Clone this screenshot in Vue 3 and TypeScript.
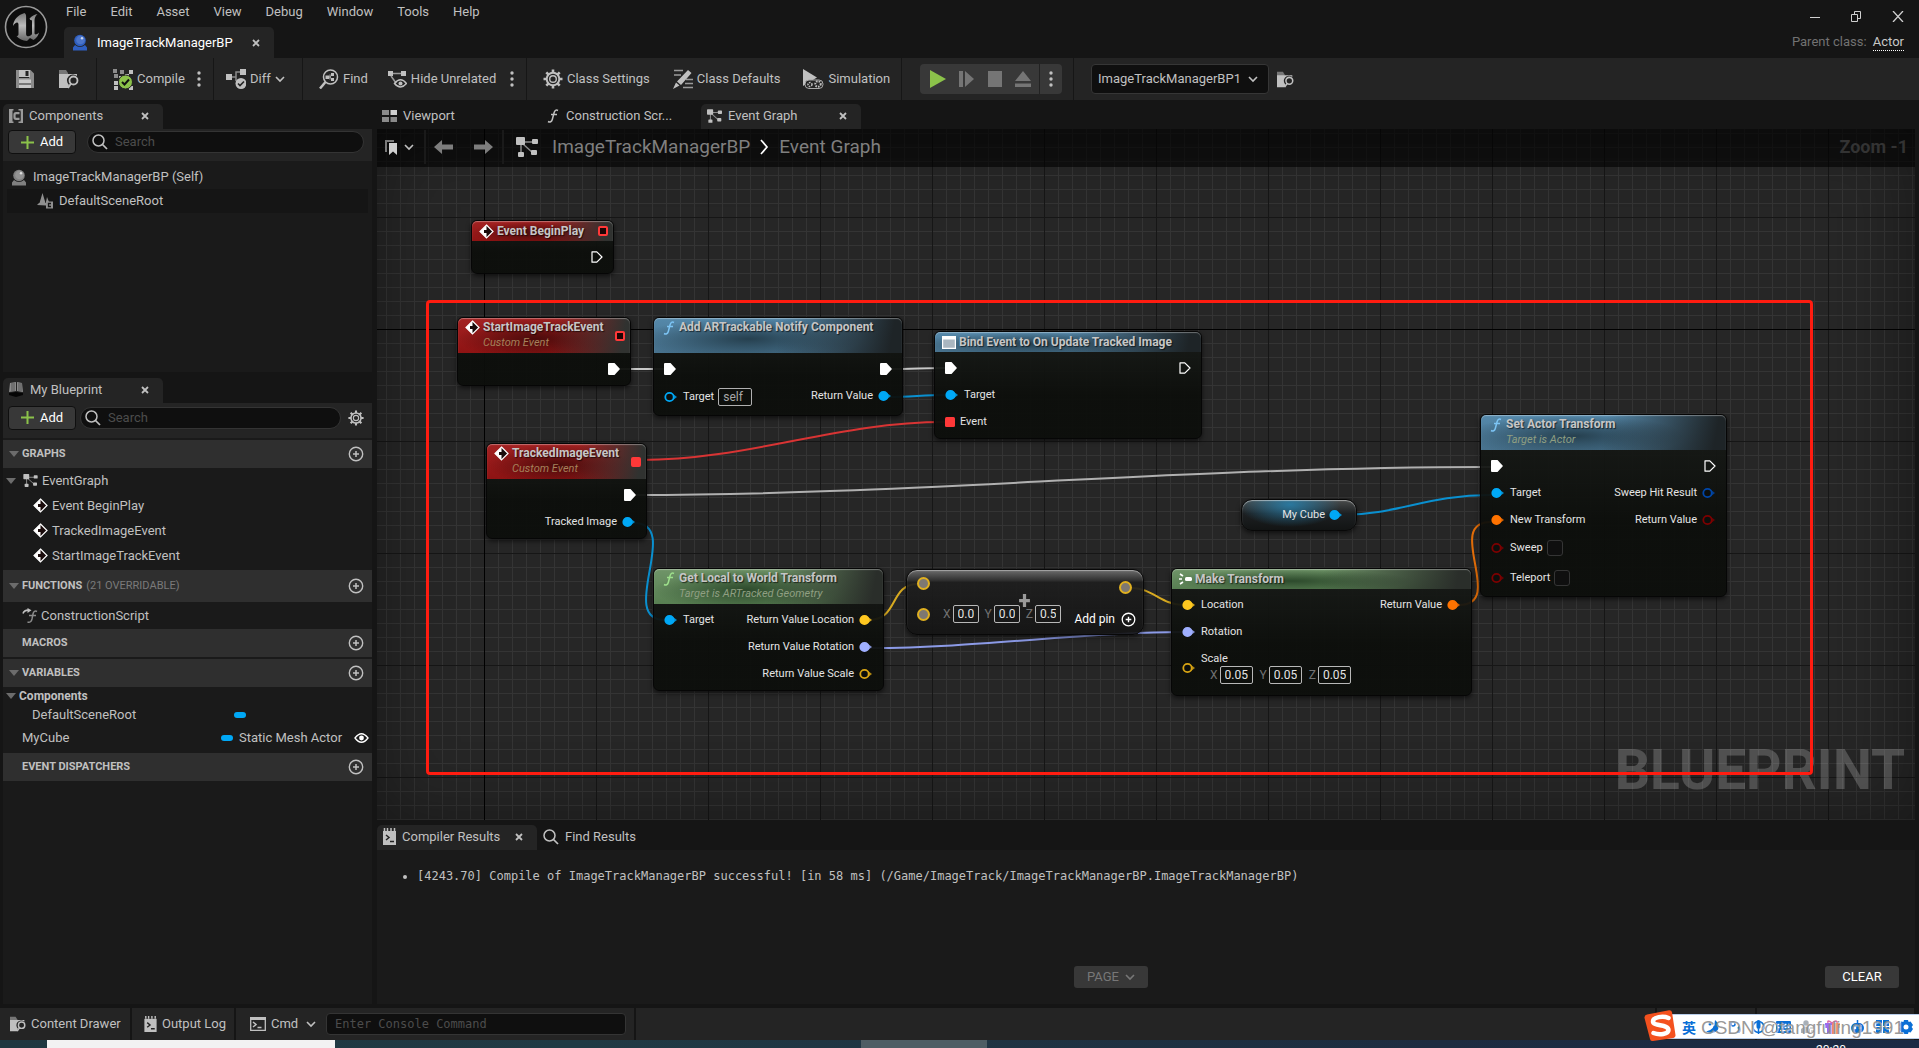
<script setup lang="ts">
import { h } from 'vue'

type Side = { kind: string; label?: string; color?: string; field?: string; check?: boolean; filled?: boolean; axes?: string[] }
interface GraphNode {
  id: string
  x: number
  y: number
  w: number
  tone: string
  icon: string
  title: string
  sub?: string
  tall?: boolean
  delegate?: 'open' | 'filled'
  left: Side[]
  right: Side[]
}

const blue = '#00a8f6'
const orange = '#ff7300'
const yellow = '#ffc820'
const lilac = '#9fafff'
const maroon = '#7d0000'

const icons: Record<string, [number, number, string]> = {
  unreal: [44, 44, '<defs><linearGradient id="ug" x1="0" y1="0" x2="0" y2="1"><stop offset="0" stop-color="#777"/><stop offset=".45" stop-color="#bbb"/><stop offset="1" stop-color="#666"/></linearGradient></defs><circle cx="22" cy="22" r="20.5" fill="#0d0d0d" stroke="#9a9a9a" stroke-width="1.6"/><path fill="url(#ug)" d="M20.500 8C13.500 10 9.500 15 9 21c1.500-2.500 3.500-4 4.700-3.300.8.500.8 1.400.8 2.300v9c0 1.500-.7 2-2 2 2.500 3 6 4.800 10.500 5l3-3 3.500 2c3-2 4.800-4.500 5.500-7.500-1.200 1.300-2.300 2-3.300 2-.9 0-1.200-.5-1.200-1.700V15.500c0-2.500 1-4.500 3-6.500-3 .5-5.500 1.800-8 4.500l.8 1.500c1.300-.2 1.700.3 1.700 1.500v12.500c-.8 1.300-2 2.200-3.500 2.200-1.600 0-2.400-.8-2.400-2.300V13c0-2 .3-3.800-1.600-5Z"/>'],
  orb: [16, 17, '<circle cx="8" cy="6.500" r="5.800" fill="currentColor"/><circle cx="8.500" cy="6" r="4.300" fill="#fff" opacity=".14"/><circle cx="10" cy="4.300" r="1.200" fill="#fff" opacity=".7"/><path fill="currentColor" d="M1 13.500l2-2.500c3 2.500 7 2.500 10 0l2 2.500V16.500H1Z"/>'],
  save: [18, 18, '<path fill="#8b8b8b" d="M0 0h3v8h10V0h1.500L18 3.500V18H0Z"/><path fill="#c0c0c0" d="M3 0h11v7H3Z"/><path fill="#242424" d="M9.500 1h3v5h-3Z"/><path fill="#c8c8c8" d="M3 9.500h12V18H3Z"/><path fill="#777" d="M3 13h12v2H3Z"/>'],
  browse: [20, 20, '<path fill="#767676" d="M0 1h7l2 3v2H0Z"/><path fill="#c0c0c0" d="M0 5h18v2a6 6 0 0 0-8 9l-1 3H0Z"/><circle cx="14.500" cy="11.500" r="4" fill="none" stroke="#c0c0c0" stroke-width="1.800"/><path stroke="#c0c0c0" stroke-width="1.800" d="M12 14.500L9 19"/>'],
  compile: [20, 21, '<path fill="#8c8c8c" d="M0 0h4v4H0ZM7 1h4v4H7ZM1 5h4v4H1Z"/><path fill="#c0c0c0" d="M16 1h4v4h-4ZM12 5h4v4h-4ZM6 7h4v4H6ZM1 12h4v4H1ZM1 17h4v4H1ZM16 17h4v4h-4Z"/><circle cx="12.500" cy="13" r="7" fill="#8bc24a" stroke="#242424"/><path fill="none" stroke="#111" stroke-width="2" d="M9 13l2.500 2.500L16 10.500"/>'],
  diff: [20, 20, '<path fill="#c0c0c0" d="M0 5h6v6H0ZM14 0h6v6h-6Z"/><path fill="none" stroke="#8a8a8a" stroke-width="1.500" d="M6 8h4M14 3h-4v9"/><circle cx="15" cy="14.500" r="5.500" fill="#c0c0c0"/><path fill="none" stroke="#242424" stroke-width="1.600" d="M12 14.500l2 2 4-4"/>'],
  find: [20, 20, '<circle cx="11.500" cy="8" r="7" fill="none" stroke="#c0c0c0" stroke-width="1.500"/><path stroke="#c0c0c0" stroke-width="2.500" d="M6.500 13L1 19.500"/><path fill="#c0c0c0" d="M6.500 6.500h3.500v3.500H6.500ZM12 4h3v3h-3ZM12 9h3v3h-3Z"/><path stroke="#c0c0c0" fill="none" d="M10 8h2M11 5.500v5"/>'],
  hide: [19, 19, '<path fill="#c0c0c0" d="M0 1h5v5H0ZM13 1h5v5h-5Z"/><path stroke="#9a9a9a" fill="none" stroke-width="1.500" d="M5 3.500h8M3 6l5 7"/><path fill="none" stroke="#c0c0c0" stroke-width="1.500" d="M6.500 13.500q6-7.500 12 0q-6 7-12 0Z"/><circle cx="12.500" cy="13.500" r="2" fill="#c0c0c0"/>'],
  gear: [20, 20, '<path stroke="currentColor" stroke-width="2.600" d="M10 .5v19M.5 10h19M3.300 3.300l13.400 13.400M16.700 3.300L3.300 16.700"/><circle cx="10" cy="10" r="6.300" fill="#242424" stroke="currentColor" stroke-width="2"/><circle cx="10" cy="10" r="3.300" fill="#242424" stroke="currentColor" stroke-width="1.400"/>'],
  defaults: [20, 20, '<path stroke="#9a9a9a" stroke-width="1.300" d="M1 1.500h9M1 6h7M13 10.500h7M12 14.500h8M10 18.500h10"/><path fill="#c0c0c0" d="M15 1l3.500 3L8 16l-4-3.500ZM3 13.500l3.500 3L0 20Z"/>'],
  simulate: [21, 20, '<path fill="#c0c0c0" d="M0 0l14 8.500L0 17Z"/><rect x="2" y="11" width="18" height="8.500" rx="4" fill="#242424" stroke="#a8a8a8"/><circle cx="7" cy="15.500" r="2" fill="none" stroke="#c0c0c0" stroke-width="1.500" stroke-dasharray="1.500 1"/><circle cx="15" cy="15" r="2.700" fill="none" stroke="#c0c0c0" stroke-width="2" stroke-dasharray="1.600 1"/>'],
  play: [16, 18, '<path fill="#8bc24a" d="M0 0l16 9L0 18Z"/>'],
  step: [16, 16, '<path fill="#757575" d="M0 0h4v16H0ZM6 0l9 8-9 8Z"/>'],
  stop: [14, 16, '<path fill="#757575" d="M0 0h14v16H0Z"/>'],
  eject: [16, 16, '<path fill="#757575" d="M8 0l8 10H0ZM0 12.500h16V16H0Z"/>'],
  dots: [4, 16, '<circle cx="2" cy="2" r="1.700" fill="#c0c0c0"/><circle cx="2" cy="8" r="1.700" fill="#c0c0c0"/><circle cx="2" cy="14" r="1.700" fill="#c0c0c0"/>'],
  chevron: [10, 8, '<path fill="none" stroke="currentColor" stroke-width="1.600" d="M1 2l4 4 4-4"/>'],
  comp: [14, 14, '<path fill="#9a9a9a" d="M0 0h14v14H9.500V11.500H11.500V2.500H9.500V0ZM0 0h4.500v14H0Z"/><rect x="3.500" y="1.500" width="8" height="11" fill="#242424"/><path fill="none" stroke="#9a9a9a" stroke-width="2.200" d="M10.500 4.200h-3.500q-1.500 0-1.500 1.500v2.600q0 1.500 1.500 1.500h3.500"/>'],
  scene: [16, 16, '<path fill="#8f8f8f" d="M5.500 0l3 10h-6ZM0 12l2-2h7v2.500ZM10 4l2 5H9Z"/><rect x="9" y="8.500" width="7" height="7" fill="#8f8f8f"/><path fill="none" stroke="#151515" stroke-width="1.300" d="M14 10.500h-2.500v3H14"/>'],
  book: [15, 15, '<path fill="#8a8a8a" d="M1 1l6-1v9l-7 1ZM8 0l5 1 1 9-6-1Z"/><path stroke="#555" fill="none" d="M3 1v8M5 1v8M10 1v8M12 1v8"/><path fill="#050505" d="M0 11l7-1 7 1v2l-7 2-7-2Z"/>'],
  search: [16, 16, '<circle cx="6.500" cy="6.500" r="5.500" fill="none" stroke="#c0c0c0" stroke-width="1.500"/><path stroke="#c0c0c0" stroke-width="1.700" d="M10.500 10.500L15 15"/>'],
  plus: [13, 13, '<path stroke="#8bc24a" stroke-width="2" d="M6.500 0v13M0 6.500h13"/>'],
  addCircle: [16, 16, '<circle cx="8" cy="8" r="6.700" fill="none" stroke="currentColor" stroke-width="1.400"/><path stroke="currentColor" stroke-width="1.500" d="M8 5v6M5 8h6"/>'],
  grid: [15, 12, '<path fill="#8a8a8a" d="M0 0h7v5H0ZM0 7h7v5H0ZM8.500 7H15v5H8.500Z"/><path fill="#d0d0d0" d="M8.500 0H15v5H8.500Z"/>'],
  func: [12, 14, '<path fill="none" stroke="currentColor" stroke-width="1.500" d="M11 1.500C9 .5 7.700 1.500 7 4L5.300 10.500C4.700 12.800 3 13.500 1 12.500M4 5.500h6"/>'],
  graph: [22, 20, '<path stroke="#8a8a8a" stroke-width="1.500" fill="none" d="M5 5h13M5 5v12M7 7l10 9"/><rect width="9" height="8" rx="1" fill="#c0c0c0"/><rect x="16" y="2" width="6" height="5" rx="1" fill="#c0c0c0"/><rect x="15" y="13" width="6" height="5" rx="1" fill="#c0c0c0"/><rect x="2" y="15" width="6" height="5" rx="1" fill="#c0c0c0"/>'],
  bookmark: [12, 15, '<path fill="none" stroke="#7b7b7b" stroke-width="2" d="M1 12V1h8"/><path fill="#d0d0d0" d="M4 3h8v12L8 11.500 4 15Z"/>'],
  arrowL: [20, 14, '<path fill="#7d7d7d" d="M0 7l8-7v4.500h11v5H8V14Z"/>'],
  arrowR: [20, 14, '<path fill="#7d7d7d" d="M20 7l-8-7v4.500H1v5h11V14Z"/>'],
  crumb: [9, 16, '<path fill="none" stroke="#fff" stroke-width="1.700" d="M1 1l6 7-6 7"/>'],
  event: [15, 15, '<path fill="#1a0b0b" stroke="#fff" stroke-width="1.200" d="M7.500 1l6.500 6.500L7.500 14 1 7.500Z"/><path fill="#fff" d="M7.500 1v13L1 7.500Z"/><path fill="#1a0b0b" d="M5 6h3V4l3.500 3.500L8 11V9H5Z"/>'],
  construct: [16, 16, '<path fill="none" stroke="#8a8a8a" stroke-width="1.500" d="M15 3.500c-2-1-3.500 0-4 2.500l-1 5c-.6 2.500-2 3.800-4.500 3M7 7.500h7"/><path fill="none" stroke="#c0c0c0" stroke-width="1.600" d="M1 5.500C2 2.500 4 2 7 2.200"/><path fill="#c0c0c0" d="M5.500 0L9.500 2.300 5.500 5Z"/>'],
  eye: [15, 12, '<path fill="none" stroke="#fff" stroke-width="1.300" d="M1 6q6.500-8.500 13 0q-6.500 8.500-13 0Z"/><circle cx="7.500" cy="6" r="2.400" fill="#fff"/>'],
  note: [13, 17, '<path fill="#c0c0c0" d="M0 3h13v14H0Z"/><path stroke="#c0c0c0" stroke-width="1.500" d="M1.500 0v3M4.500 0v3M8 0v3M11.500 0v3"/><path fill="none" stroke="#222" stroke-width="1.500" d="M3 7l3 2.500L3 12M7 13.500h4"/>'],
  term: [16, 14, '<path fill="none" stroke="#c0c0c0" stroke-width="1.300" d="M.7 1h14.600v12.300H.7Z"/><path fill="#c0c0c0" d="M0 0h16v3H0Z"/><path fill="none" stroke="#c0c0c0" stroke-width="1.500" d="M3 5l3 2.500L3 10M7.500 10.500h4"/>'],
  execOn: [12, 12, '<path fill="#fff" d="M1 0h5.500L12 6l-5.500 6H1Q0 12 0 11V1Q0 0 1 0Z"/>'],
  execOff: [12, 12, '<path fill="none" stroke="#fff" stroke-width="1.200" stroke-linejoin="round" d="M1 .8h4.800L11 6l-5.200 5.200H1Z"/>'],
  bind: [14, 13, '<path fill="#a9b6c0" d="M0 0h14v13H0Z"/><path fill="none" stroke="#fff" stroke-width="1.200" d="M.6.6h12.800v11.800H.6Z"/><path fill="#fff" d="M0 0h14v3.500H0Z"/>'],
  make: [13, 12, '<path fill="none" stroke="#fff" stroke-width="1.600" d="M1 1l3 2M0 6h3M1 11l3-2"/><rect x="6" y="4" width="7" height="4" rx="1.500" fill="#fff"/>'],
  minimize: [10, 10, '<path stroke="#d0d0d0" d="M0 5.500h10"/>'],
  restore: [10, 11, '<path fill="none" stroke="#d0d0d0" d="M.5 3.500h6v7h-6ZM3.500 3.500v-3h6v7h-3"/>'],
  close: [12, 11, '<path stroke="#d0d0d0" stroke-width="1.300" d="M1 0l10 11M11 0L1 11"/>'],
  tabClose: [8, 8, '<path stroke="#c0c0c0" stroke-width="1.800" d="M1 1l6 6M7 1L1 7"/>'],
  tri: [10, 6, '<path fill="#6c6c6c" d="M0 0h10L5 6Z"/>'],
  sogou: [32, 31, '<path fill="#f4511e" d="M3 4.500L25 .3q2.500-.3 3 2L31.500 25q.3 2.500-2 3L9 31q-2.500.3-3-2L.5 8q-.3-2.800 2.500-3.500Z"/><path fill="none" stroke="#fff" stroke-width="4.500" stroke-linecap="round" d="M24.500 8C19 5.500 9 7 9 11.500c0 5 15.500 2.500 15.500 8.500 0 4-9 5.500-15 3"/>'],
  moon: [13, 13, '<path fill="#0a6fd6" d="M9 0q5 4 3 9.500Q8 15 0 11.500 9 10 9 0Z"/><circle cx="4" cy="4" r="1.500" fill="#0a6fd6"/>'],
  punct: [12, 12, '<circle cx="3" cy="3" r="2" fill="none" stroke="#0a6fd6" stroke-width="1.500"/><path fill="none" stroke="#0a6fd6" stroke-width="2.500" d="M8 6q3 2 0 6"/>'],
  mic: [13, 14, '<circle cx="6.500" cy="7" r="5.500" fill="none" stroke="#0a6fd6" stroke-width="1.500"/><rect x="4.500" y="0" width="4" height="9" rx="2" fill="#0a6fd6"/><path stroke="#0a6fd6" stroke-width="1.500" d="M6.500 9v5"/>'],
  keyboard: [15, 12, '<rect width="15" height="12" rx="1" fill="#0a6fd6"/><path stroke="#fff" stroke-width="1.500" stroke-dasharray="2 1.500" d="M1.500 3.500h12M1.500 6.500h12"/><path stroke="#fff" stroke-width="1.300" d="M4 9.500h7"/>'],
  person: [13, 13, '<circle cx="5" cy="3" r="2.700" fill="#a9b0b8"/><path fill="#a9b0b8" d="M0 13V9q5-5 9 0v4Z"/><path stroke="#a9b0b8" d="M9 8h4M10 11h3"/>'],
  gift: [15, 14, '<path fill="#9b6cf0" d="M0 3h7v11H2V8H0Z"/><path fill="#f28b66" d="M7 3h8v5h-2v6H7Z"/><path fill="none" stroke="#d86ca8" stroke-width="1.500" d="M7 3Q2-1 3 3M7 3q5-4 5 0"/>'],
  robot: [15, 13, '<rect y="3" x="1" width="13" height="10" rx="5" fill="#0a6fd6"/><path stroke="#0a6fd6" stroke-width="1.500" d="M7.500 0v4"/><circle cx="5" cy="8" r="1.300" fill="#fff"/><circle cx="10" cy="8" r="1.300" fill="#fff"/>'],
  apps: [13, 13, '<path fill="#0a6fd6" d="M0 0h6v6H0ZM7 0h6v6H7ZM0 7h6v6H0ZM7 7h6v6H7Z"/>'],
  cog: [14, 14, '<path fill="#0a6fd6" d="M5 0h4l.6 2 2-.4L14 5l-1.400 2L14 9l-2.400 3.400-2-.4L9 14H5l-.6-2-2 .4L0 9l1.400-2L0 5l2.400-3.400 2 .4Z"/><circle cx="7" cy="7" r="2.500" fill="#fff"/>'],
}

const Icon = (props: { name: string; width?: number; height?: number }) => {
  const [w, hgt, body] = icons[props.name]
  return h('svg', {
    width: props.width ?? w,
    height: props.height ?? hgt,
    viewBox: `0 0 ${w} ${hgt}`,
    'aria-hidden': 'true',
    innerHTML: body,
  })
}
Icon.props = ['name', 'width', 'height']

const Pin = (props: { side: Side }) => {
  const s = props.side
  if (s.kind === 'exec') return h(Icon, { name: s.filled ? 'execOn' : 'execOff' })
  if (s.kind === 'delegate') {
    return h('svg', { width: 10, height: 10, viewBox: '0 0 10 10', innerHTML: `<rect width="10" height="10" rx="1.500" fill="${s.color}"/>` })
  }
  return h('svg', {
    width: 14,
    height: 12,
    viewBox: '0 0 14 12',
    innerHTML: `<path fill="${s.color}" opacity=".8" d="M9 3l4 3-4 3Z"/><circle cx="5.500" cy="6" r="4.200" fill="${s.filled ? s.color : '#0c0e0c'}" stroke="${s.color}" stroke-width="1.800"/>`,
  })
}
Pin.props = ['side']

const menus = ['File', 'Edit', 'Asset', 'View', 'Debug', 'Window', 'Tools', 'Help']

const nodes: GraphNode[] = [
  { id: 'begin', x: 94, y: 91, w: 143, tone: 'red', icon: 'event', title: 'Event BeginPlay', delegate: 'open', left: [], right: [{ kind: 'exec' }] },
  { id: 'start', x: 80, y: 188, w: 174, tone: 'red', icon: 'event', title: 'StartImageTrackEvent', sub: 'Custom Event', tall: true, delegate: 'open', left: [], right: [{ kind: 'exec', filled: true }] },
  {
    id: 'notify', x: 276, y: 188, w: 250, tone: 'blue', icon: 'func', title: 'Add ARTrackable Notify Component', tall: true,
    left: [{ kind: 'exec', filled: true }, { kind: 'data', color: blue, label: 'Target', field: 'self' }],
    right: [{ kind: 'exec', filled: true }, { kind: 'data', color: blue, filled: true, label: 'Return Value' }],
  },
  {
    id: 'bind', x: 557, y: 202, w: 268, tone: 'blue', icon: 'bind', title: 'Bind Event to On Update Tracked Image',
    left: [{ kind: 'exec', filled: true }, { kind: 'data', color: blue, filled: true, label: 'Target' }, { kind: 'delegate', color: '#ff3838', label: 'Event' }],
    right: [{ kind: 'exec' }],
  },
  {
    id: 'tracked', x: 109, y: 314, w: 161, tone: 'red', icon: 'event', title: 'TrackedImageEvent', sub: 'Custom Event', tall: true, delegate: 'filled',
    left: [], right: [{ kind: 'exec', filled: true }, { kind: 'data', color: blue, filled: true, label: 'Tracked Image' }],
  },
  {
    id: 'local', x: 276, y: 439, w: 231, tone: 'green', icon: 'func', title: 'Get Local to World Transform', sub: 'Target is ARTracked Geometry', tall: true,
    left: [{ kind: 'data', color: blue, filled: true, label: 'Target' }],
    right: [
      { kind: 'data', color: yellow, filled: true, label: 'Return Value Location' },
      { kind: 'data', color: lilac, filled: true, label: 'Return Value Rotation' },
      { kind: 'data', color: '#d9a514', label: 'Return Value Scale' },
    ],
  },
  {
    id: 'make', x: 794, y: 439, w: 301, tone: 'green', icon: 'make', title: 'Make Transform',
    left: [
      { kind: 'data', color: yellow, filled: true, label: 'Location' },
      { kind: 'data', color: lilac, filled: true, label: 'Rotation' },
      { kind: 'data', color: '#d9a514', label: 'Scale', axes: ['0.05', '0.05', '0.05'] },
    ],
    right: [{ kind: 'data', color: orange, filled: true, label: 'Return Value' }],
  },
  {
    id: 'setactor', x: 1103, y: 285, w: 247, tone: 'blue', icon: 'func', title: 'Set Actor Transform', sub: 'Target is Actor', tall: true,
    left: [
      { kind: 'exec', filled: true },
      { kind: 'data', color: blue, filled: true, label: 'Target' },
      { kind: 'data', color: orange, filled: true, label: 'New Transform' },
      { kind: 'data', color: maroon, label: 'Sweep', check: true },
      { kind: 'data', color: maroon, label: 'Teleport', check: true },
    ],
    right: [{ kind: 'exec' }, { kind: 'data', color: '#0046a8', label: 'Sweep Hit Result' }, { kind: 'data', color: maroon, label: 'Return Value' }],
  },
]

const wires = [
  { c: '#c8c8c8', d: 'M242 240H288' },
  { c: '#c8c8c8', d: 'M514 240C532 240 550 239 568 239' },
  { c: '#0a90d0', d: 'M512 268C532 268 548 266 568 266' },
  { c: '#d83434', d: 'M263 331C373 331 458 293 568 293' },
  { c: '#b0b0b0', d: 'M258 366C540 366 800 338 1114 338' },
  { c: '#0a90d0', d: 'M257 394C306 394 239 491 288 491' },
  { c: '#d8aa20', d: 'M492 491C522 491 512 455 541 455' },
  { c: '#d8aa20', d: 'M755 459C775 459 785 476 806 476' },
  { c: '#8c9be8', d: 'M494 519C604 519 700 503 806 503' },
  { c: '#0a90d0', d: 'M965 386C1020 386 1050 366 1114 366' },
  { c: '#e06c08', d: 'M1082 476C1130 476 1066 393 1114 393' },
]

const axisNames = ['X', 'Y', 'Z']
const graphEvents = ['Event BeginPlay', 'TrackedImageEvent', 'StartImageTrackEvent']
const imeIcons = ['moon', 'punct', 'mic', 'keyboard', 'person', 'gift', 'robot', 'apps', 'cog']
</script>

<template>
  <div class="editor">
    <header class="titlebar">
      <Icon name="unreal" class="logo" />
      <div class="title-main">
        <nav class="menus">
          <button v-for="m in menus" :key="m">{{ m }}</button>
        </nav>
        <div class="doc-tab">
          <Icon name="orb" class="orb-blue" />
          <span>ImageTrackManagerBP</span>
          <button aria-label="Close tab"><Icon name="tabClose" /></button>
        </div>
      </div>
      <div class="title-side">
        <div class="win-controls">
          <button aria-label="Minimize"><Icon name="minimize" /></button>
          <button aria-label="Restore"><Icon name="restore" /></button>
          <button aria-label="Close"><Icon name="close" /></button>
        </div>
        <div class="parent">Parent class: <a href="#">Actor</a></div>
      </div>
    </header>

    <div class="toolbar">
      <div class="group g-file">
        <button aria-label="Save"><Icon name="save" /></button>
        <button aria-label="Browse"><Icon name="browse" /></button>
      </div>
      <div class="group g-compile">
        <button><Icon name="compile" />Compile</button>
        <button aria-label="Compile options"><Icon name="dots" /></button>
      </div>
      <div class="group g-diff">
        <button><Icon name="diff" />Diff<Icon name="chevron" /></button>
      </div>
      <div class="group g-find">
        <button><Icon name="find" />Find</button>
        <button><Icon name="hide" />Hide Unrelated</button>
        <button class="tight" aria-label="Hide options"><Icon name="dots" /></button>
      </div>
      <div class="group g-class">
        <button><Icon name="gear" />Class Settings</button>
        <button><Icon name="defaults" />Class Defaults</button>
        <button><Icon name="simulate" />Simulation</button>
      </div>
      <div class="group g-play">
        <div class="playbox">
          <button aria-label="Play"><Icon name="play" /></button>
          <button aria-label="Step"><Icon name="step" /></button>
          <button aria-label="Stop"><Icon name="stop" /></button>
          <button aria-label="Eject"><Icon name="eject" /></button>
          <button class="more" aria-label="Play options"><Icon name="dots" /></button>
        </div>
      </div>
      <div class="group g-debug">
        <div class="combo">
          <select aria-label="Debug object"><option>ImageTrackManagerBP1</option></select>
          <Icon name="chevron" />
        </div>
        <button aria-label="Locate"><Icon name="browse" :width="17" :height="17" /></button>
      </div>
    </div>

    <main class="workspace">
      <aside class="sidebar">
        <section class="panel components">
          <div class="tab wide">
            <Icon name="comp" /><span>Components</span>
            <button aria-label="Close Components"><Icon name="tabClose" /></button>
          </div>
          <div class="panel-head">
            <button class="add"><Icon name="plus" />Add</button>
            <label class="search"><Icon name="search" /><input type="text" placeholder="Search" aria-label="Search components" /></label>
          </div>
          <div class="tree">
            <div class="tree-row self"><Icon name="orb" />ImageTrackManagerBP (Self)</div>
            <div class="tree-row child"><Icon name="scene" />DefaultSceneRoot</div>
          </div>
        </section>

        <section class="panel blueprint">
          <div class="tab wide">
            <Icon name="book" /><span>My Blueprint</span>
            <button aria-label="Close My Blueprint"><Icon name="tabClose" /></button>
          </div>
          <div class="panel-head narrow">
            <button class="add"><Icon name="plus" />Add</button>
            <label class="search"><Icon name="search" /><input type="text" placeholder="Search" aria-label="Search blueprint" /></label>
            <button class="opts" aria-label="Options"><Icon name="gear" :width="16" :height="16" /></button>
          </div>
          <div class="sections">
            <h3><Icon name="tri" />GRAPHS<button aria-label="Add graph"><Icon name="addCircle" /></button></h3>
            <div class="list">
              <div class="item root"><Icon name="tri" /><Icon name="graph" :width="15" :height="13" />EventGraph</div>
              <div v-for="e in graphEvents" :key="e" class="item leaf"><Icon name="event" />{{ e }}</div>
            </div>
            <h3 class="tall"><Icon name="tri" />FUNCTIONS <small>(21 OVERRIDABLE)</small><button aria-label="Add function"><Icon name="addCircle" /></button></h3>
            <div class="item fn"><Icon name="construct" />ConstructionScript</div>
            <h3 class="plain">MACROS<button aria-label="Add macro"><Icon name="addCircle" /></button></h3>
            <div class="rule"></div>
            <h3><Icon name="tri" />VARIABLES<button aria-label="Add variable"><Icon name="addCircle" /></button></h3>
            <div class="list">
              <div class="item cat"><Icon name="tri" />Components</div>
              <div class="item var nested"><span>DefaultSceneRoot</span><i class="pill"></i></div>
              <div class="item var">
                <span>MyCube</span><i class="pill"></i><b>Static Mesh Actor</b>
                <button aria-label="Toggle visibility"><Icon name="eye" /></button>
              </div>
            </div>
            <h3 class="plain">EVENT DISPATCHERS<button aria-label="Add dispatcher"><Icon name="addCircle" /></button></h3>
          </div>
        </section>
      </aside>

      <div class="center">
        <div class="tabs">
          <div class="tab ghost view"><Icon name="grid" /><span>Viewport</span></div>
          <div class="tab ghost cons"><Icon name="func" /><span>Construction Scr...</span></div>
          <div class="tab wide">
            <Icon name="graph" :width="15" :height="14" /><span>Event Graph</span>
            <button aria-label="Close Event Graph"><Icon name="tabClose" /></button>
          </div>
        </div>

        <div class="graph">
          <div class="graph-bar">
            <button class="marks" aria-label="Bookmarks"><Icon name="bookmark" /><Icon name="chevron" /></button>
            <div class="history">
              <button aria-label="Back"><Icon name="arrowL" /></button>
              <button aria-label="Forward"><Icon name="arrowR" /></button>
            </div>
            <div class="crumbs">
              <Icon name="graph" /><span>ImageTrackManagerBP</span><Icon name="crumb" /><span>Event Graph</span>
            </div>
            <strong>Zoom -1</strong>
          </div>
          <div class="brand">BLUEPRINT</div>

          <svg class="wires" aria-hidden="true">
            <path v-for="w in wires" :key="w.d" :d="w.d" :stroke="w.c" />
          </svg>

          <article
            v-for="n in nodes"
            :key="n.id"
            class="node"
            :class="[n.tone, { tall: n.tall }]"
            :style="{ left: n.x + 'px', top: n.y + 'px', width: n.w + 'px' }"
          >
            <header>
              <Icon :name="n.icon" class="node-icon" />
              <div class="names">
                <h4>{{ n.title }}</h4>
                <p v-if="n.sub">{{ n.sub }}</p>
              </div>
              <span v-if="n.delegate" class="delegate" :class="n.delegate"></span>
            </header>
            <div class="pins">
              <div class="col">
                <div v-for="(s, i) in n.left" :key="i" class="pin" :class="{ roomy: s.field || s.check, vector: s.axes }">
                  <Pin :side="s" />
                  <label v-if="s.check">{{ s.label }}<input type="checkbox" /></label>
                  <label v-else-if="s.field">{{ s.label }}<input type="text" class="selfbox" :value="s.field" /></label>
                  <div v-else-if="s.axes">
                    <span>{{ s.label }}</span>
                    <div class="axes">
                      <label v-for="(v, k) in s.axes" :key="k">{{ axisNames[k] }}<input type="text" :value="v" /></label>
                    </div>
                  </div>
                  <span v-else-if="s.label">{{ s.label }}</span>
                </div>
              </div>
              <div class="col out">
                <div v-for="(s, i) in n.right" :key="i" class="pin">
                  <span v-if="s.label">{{ s.label }}</span>
                  <Pin :side="s" />
                </div>
              </div>
            </div>
          </article>

          <article class="cube">
            <span>My Cube</span><Pin :side="{ kind: 'data', color: blue, filled: true }" />
          </article>

          <article class="sum">
            <div class="sum-in">
              <i class="ring"></i>
              <div class="sum-row">
                <i class="ring"></i>
                <div class="axes">
                  <label>X<input type="text" value="0.0" /></label>
                  <label>Y<input type="text" value="0.0" /></label>
                  <label>Z<input type="text" value="0.5" /></label>
                </div>
              </div>
            </div>
            <div class="sum-out">
              <i class="ring"></i>
              <button>Add pin<Icon name="addCircle" :width="15" :height="15" /></button>
            </div>
            <svg class="sum-plus" viewBox="0 0 10 12" aria-hidden="true"><path d="M5 0v12M0 6h10" /></svg>
          </article>

          <div class="callout"></div>
        </div>

        <section class="results">
          <div class="tabs">
            <div class="tab wide">
              <Icon name="note" /><span>Compiler Results</span>
              <button aria-label="Close Compiler Results"><Icon name="tabClose" /></button>
            </div>
            <div class="tab ghost"><Icon name="search" /><span>Find Results</span></div>
          </div>
          <div class="log">
            <ul>
              <li>[4243.70] Compile of ImageTrackManagerBP successful! [in 58 ms] (/Game/ImageTrack/ImageTrackManagerBP.ImageTrackManagerBP)</li>
            </ul>
            <div class="log-actions">
              <button class="page" disabled>PAGE<Icon name="chevron" /></button>
              <button class="clear">CLEAR</button>
            </div>
          </div>
        </section>
      </div>
    </main>

    <footer class="status">
      <button class="drawer"><Icon name="browse" :width="16" :height="16" />Content Drawer</button>
      <button class="output"><Icon name="note" :height="16" />Output Log</button>
      <div class="cmd">
        <button><Icon name="term" />Cmd<Icon name="chevron" /></button>
        <input type="text" placeholder="Enter Console Command" aria-label="Console command" />
      </div>
      <div class="fill"></div>
      <div class="cell a"></div>
      <div class="cell b"></div>
      <div class="ime">
        <Icon name="sogou" class="sogou" />
        <span>英</span>
        <Icon v-for="i in imeIcons" :key="i" :name="i" />
      </div>
      <div class="credit">CSDN @tangfuling1991</div>
    </footer>
    <div class="taskbar">
      <div class="window-a"></div>
      <div class="window-b"></div>
      <time>20:20</time>
    </div>
  </div>
</template>

<style>
body {
  background: #151515;
}
</style>

<style scoped>
* {
  box-sizing: border-box;
}
.editor {
  display: flex;
  flex-direction: column;
  min-height: 100vh;
  background: #151515;
  color: #c0c0c0;
  font: 13px/16px Roboto, 'Liberation Sans', sans-serif;
  overflow: hidden;
}
svg {
  flex: none;
  display: block;
}
button {
  display: flex;
  align-items: center;
  background: none;
  border: 0;
  padding: 0;
  color: inherit;
  font: inherit;
  white-space: nowrap;
}
input {
  font: inherit;
  color: inherit;
  min-width: 0;
}
i {
  flex: none;
}

/* title bar */
.titlebar {
  display: flex;
  height: 58px;
}
.logo {
  margin: 5px 0 0 4px;
}
.title-main {
  flex: 1;
  display: flex;
  flex-direction: column;
  justify-content: space-between;
  padding-left: 16px;
}
.menus {
  display: flex;
  gap: 24px;
  padding: 4px 0 0 2px;
}
.doc-tab {
  display: flex;
  align-items: center;
  width: 210px;
  height: 31px;
  padding: 0 14px 0 8px;
  background: #242424;
  border-radius: 5px 5px 0 0;
  color: #fff;
}
.doc-tab span {
  flex: 1;
  padding-left: 9px;
}
.orb-blue {
  color: #2f5fc0;
}
.title-side {
  display: flex;
  flex-direction: column;
  align-items: flex-end;
  padding: 11px 15px 0 0;
}
.win-controls {
  display: flex;
  align-items: center;
  gap: 31px;
}
.parent {
  margin-top: 12px;
  color: #727272;
}
.parent a {
  display: inline-block;
  margin-left: 3px;
  color: #c8c8c8;
  text-decoration: none;
  border-bottom: 1px dotted #fff;
}

/* toolbar */
.toolbar {
  display: flex;
  height: 42px;
  background: #242424;
}
.group {
  display: flex;
  align-items: center;
  border-right: 1px solid #161616;
}
.group button {
  gap: 4px;
}
.g-file {
  width: 97px;
  padding-left: 16px;
  gap: 25px;
}
.g-compile {
  width: 117px;
  padding-left: 16px;
  gap: 12px;
}
.g-diff {
  width: 89px;
  padding-left: 12px;
}
.g-find {
  width: 224px;
  padding-left: 16px;
  gap: 20px;
}
.g-find .tight {
  margin-left: -6px;
}
.g-class {
  width: 375px;
  padding-left: 16px;
  gap: 23px;
}
.g-play {
  width: 172px;
  padding-left: 18px;
}
.g-debug {
  padding-left: 17px;
  gap: 8px;
  border: 0;
}
.playbox {
  display: flex;
  align-items: center;
  height: 30px;
  padding-left: 10px;
  gap: 13px;
  background: #383838;
  border-radius: 4px;
}
.playbox .more {
  height: 30px;
  padding: 0 9px;
  margin-left: -5px;
  border-left: 1px solid #222;
}
.combo {
  display: flex;
  align-items: center;
  width: 178px;
  height: 30px;
  padding-right: 10px;
  background: #0f0f0f;
  border: 1px solid #363636;
  border-radius: 4px;
}
.combo select {
  flex: 1;
  appearance: none;
  background: none;
  border: 0;
  padding: 0 0 0 6px;
  color: inherit;
  font: inherit;
}

/* panels and tabs */
.workspace {
  flex: 1;
  display: flex;
  padding: 4px 4px 4px 3px;
}
.sidebar {
  width: 369px;
  flex: none;
  display: flex;
  flex-direction: column;
}
.panel {
  display: flex;
  flex-direction: column;
}
.components {
  height: 268px;
}
.blueprint {
  flex: 1;
  margin-top: 6px;
}
.tab {
  display: flex;
  align-items: center;
  height: 25px;
  padding: 0 14px 2px 6px;
  gap: 6px;
}
.tab.wide {
  width: 160px;
  background: #242424;
  border-radius: 5px 5px 0 0;
}
.tab span {
  flex: 1;
  white-space: nowrap;
}
.panel-head {
  display: flex;
  align-items: center;
  height: 32px;
  padding: 0 8px 6px 5px;
  gap: 11px;
  background: #242424;
}
.panel-head.narrow {
  height: 35px;
  gap: 4px;
}
.add {
  justify-content: center;
  gap: 6px;
  width: 68px;
  height: 24px;
  background: #383838;
  border: 1px solid #0f0f0f;
  border-radius: 4px;
  color: #fff;
}
.search {
  flex: 1;
  display: flex;
  align-items: center;
  height: 22px;
  padding: 0 8px 0 4px;
  gap: 7px;
  background: #0f0f0f;
  border: 1px solid #343434;
  border-radius: 11px;
}
.search input {
  flex: 1;
  background: none;
  border: 0;
  padding: 0;
}
input::placeholder {
  color: #4c4c4c;
  opacity: 1;
}
.opts {
  margin-left: 3px;
}
.tree {
  flex: 1;
  padding: 4px;
  background: #1a1a1a;
}
.tree-row {
  display: flex;
  align-items: center;
  height: 24px;
  gap: 6px;
}
.tree-row.self {
  padding-left: 4px;
}
.tree-row.self svg {
  color: #808080;
}
.tree-row.child {
  padding-left: 30px;
  background: #151515;
}

/* blueprint sections */
.sections {
  flex: 1;
  background: #1a1a1a;
  padding-top: 2px;
}
h3 {
  display: flex;
  align-items: center;
  height: 28px;
  margin: 0;
  padding: 0 8px 0 6px;
  background: #2f2f2f;
  font: bold 11px/14px Roboto, sans-serif;
}
h3 > svg {
  margin-right: 3px;
}
h3.plain {
  padding-left: 19px;
}
h3.tall {
  height: 32px;
}
h3 small {
  margin-left: 4px;
  font: 11px/14px Roboto, sans-serif;
  color: #7a7a7a;
}
h3 button {
  margin-left: auto;
}
.list {
  padding-bottom: 2px;
}
.rule {
  height: 2px;
}
.item {
  display: flex;
  align-items: center;
  height: 25px;
  gap: 4px;
}
.item.root {
  padding-left: 3px;
}
.item.root svg + svg {
  margin: 0 0 0 3px;
}
.item.leaf {
  padding-left: 30px;
}
.item.fn {
  height: 27px;
  padding-left: 19px;
  gap: 3px;
}
.item.cat {
  height: 18px;
  padding-left: 3px;
  gap: 3px;
  font-weight: bold;
  font-size: 12px;
}
.item.var {
  height: 27px;
  padding-left: 19px;
  gap: 6px;
}
.item.var.nested {
  height: 19px;
  padding-left: 29px;
}
.item.var span {
  width: 193px;
}
.item.var.nested span {
  width: 196px;
}
.item.var b {
  width: 109px;
  font-weight: normal;
  white-space: nowrap;
}
.pill {
  width: 12px;
  height: 6px;
  border-radius: 3px;
  background: #00a8f6;
}

/* graph */
.center {
  flex: 1;
  min-width: 0;
  display: flex;
  flex-direction: column;
  padding-left: 5px;
}
.tabs {
  display: flex;
}
.tab.ghost.view {
  width: 164px;
  padding-left: 5px;
}
.tab.ghost.cons {
  width: 160px;
  gap: 7px;
}
.graph {
  flex: 1;
  position: relative;
  overflow: hidden;
  background:
    linear-gradient(#000, #000) 107px 0 / 1px 100% no-repeat,
    linear-gradient(#000, #000) 0 200px / 100% 1px no-repeat,
    linear-gradient(90deg, #161616 1px, transparent 1px) 107px 88px / 112px 112px,
    linear-gradient(#161616 1px, transparent 1px) 107px 88px / 112px 112px,
    linear-gradient(90deg, #343434 1px, transparent 1px) 9px 4px / 14px 14px,
    linear-gradient(#343434 1px, transparent 1px) 9px 4px / 14px 14px,
    #262626;
  box-shadow: inset 0 0 70px rgba(0, 0, 0, 0.4);
}
.graph-bar {
  display: flex;
  align-items: center;
  height: 38px;
  padding: 0 7px 2px 8px;
  background: rgba(0, 0, 0, 0.6);
}
.marks {
  gap: 7px;
  width: 39px;
}
.history {
  display: flex;
  align-items: center;
  gap: 19px;
  height: 34px;
  padding: 0 9px 0 8px;
  border: solid #1a1a1a;
  border-width: 0 2px;
}
.crumbs {
  display: flex;
  align-items: center;
  flex: 1;
  gap: 10px;
  padding-left: 12px;
  font-size: 19px;
  line-height: 24px;
  color: #7f7f7f;
}
.crumbs svg:first-child {
  margin-right: 4px;
}
.graph-bar strong {
  font-size: 18px;
  line-height: 24px;
  color: #333;
}
.brand {
  position: absolute;
  right: 10px;
  bottom: 18px;
  font: bold 55px/64px Roboto, sans-serif;
  color: rgba(255, 255, 255, 0.2);
}
.wires {
  position: absolute;
  inset: 0;
  width: 100%;
  height: 100%;
  fill: none;
  stroke-width: 2;
}
.node {
  position: absolute;
  border: 1px solid #060606;
  border-radius: 6px;
  background: linear-gradient(rgba(24, 27, 24, 0.93), rgba(12, 14, 11, 0.95) 60%);
  box-shadow: 0 2px 5px rgba(0, 0, 0, 0.6);
  color: #e4e4e4;
  font-size: 11px;
  line-height: 14px;
}
.node header {
  display: flex;
  align-items: center;
  height: 20px;
  padding: 0 5px 0 7px;
  border-radius: 5px 5px 0 0;
  box-shadow: inset 0 1px 1px rgba(255, 255, 255, 0.35);
}
.node.tall header {
  height: 35px;
}
.node .node-icon {
  margin-right: 3px;
}
.node.tall .node-icon {
  align-self: flex-start;
  margin-top: 2px;
}
.red header {
  background:
    linear-gradient(100deg, transparent 55%, #303230 95%),
    radial-gradient(ellipse 45% 60% at 45% 60%, #4a0b0b, transparent),
    linear-gradient(#a32222, #8e1313);
}
.blue header {
  background:
    linear-gradient(100deg, transparent 50%, #1e2427 95%),
    radial-gradient(ellipse 45% 60% at 38% 60%, #26404f, transparent),
    linear-gradient(#5589ab, #47718c);
}
.green header {
  background:
    linear-gradient(100deg, transparent 50%, #2a2e2a 95%),
    radial-gradient(ellipse 40% 60% at 40% 60%, #2d4a2c, transparent),
    linear-gradient(#6f9468, #587f52);
}
.names {
  flex: 1;
}
.tall .names {
  align-self: flex-start;
}
h4 {
  margin: 0;
  font: bold 12px/18px Roboto, sans-serif;
  color: #c6c6c6;
  text-shadow: 1px 1px 1px rgba(0, 0, 0, 0.6);
  white-space: nowrap;
}
.node p {
  margin: 0;
  font-style: italic;
  color: #a5805a;
}
.blue p,
.green p {
  color: #8f9f82;
}
.blue .node-icon {
  color: #7cc4f4;
}
.green .node-icon {
  color: #9de08c;
}
.blue.tall .node-icon,
.green.tall .node-icon {
  margin: 3px 4px 0 2px;
}
.delegate {
  width: 10px;
  height: 10px;
  border: 2px solid #ff3838;
  border-radius: 2px;
  background: #1c0505;
}
.delegate.filled {
  background: #ff3838;
}
.pins {
  display: flex;
  justify-content: space-between;
  padding: 2px 10px 3px;
}
.pin {
  display: flex;
  align-items: center;
  height: 27px;
  gap: 5px;
  white-space: nowrap;
}
.pin.roomy {
  height: 30px;
}
.pin.vector {
  height: 47px;
  padding-bottom: 2px;
}
.out .pin {
  justify-content: flex-end;
}
.pin label {
  display: flex;
  align-items: center;
  gap: 4px;
}
.selfbox {
  width: 34px;
  height: 18px;
  padding: 0 4px;
  font-size: 12px;
  background: none;
  border: 1px solid #b0b0b0;
  border-radius: 2px;
  color: #a8a8a8;
}
.pin input[type='checkbox'] {
  appearance: none;
  width: 16px;
  height: 16px;
  margin: 0;
  background: #0f0f0f;
  border: 1px solid #353535;
  border-radius: 3px;
}
.axes {
  display: flex;
  gap: 7px;
  color: #727272;
  font-size: 12px;
}
.vector .axes {
  padding-left: 9px;
}
.axes label {
  display: flex;
  align-items: center;
  gap: 2px;
}
.axes input {
  width: 33px;
  height: 18px;
  padding: 0 4px;
  background: none;
  border: 1px solid #b8b8b8;
  border-radius: 2px;
  color: #e4e4e4;
}
.cube {
  position: absolute;
  left: 864px;
  top: 370px;
  width: 116px;
  height: 32px;
  display: flex;
  align-items: center;
  justify-content: flex-end;
  gap: 4px;
  padding-right: 13px;
  border: 1px solid #080808;
  border-radius: 11px;
  background:
    radial-gradient(ellipse 45% 75% at 42% 15%, rgba(40, 130, 175, 0.85), transparent),
    linear-gradient(#4a4c4c, #1d2022 45%, #121414);
  box-shadow: inset 0 1px 1px rgba(255, 255, 255, 0.5), 0 2px 5px rgba(0, 0, 0, 0.6);
  color: #e4e4e4;
  font-size: 11px;
}
.sum {
  position: absolute;
  left: 529px;
  top: 440px;
  width: 238px;
  height: 66px;
  display: flex;
  justify-content: space-between;
  padding: 7px 7px 7px 10px;
  border: 1px solid #080808;
  border-radius: 11px;
  background: linear-gradient(#6c6c6c, #2c2c2c 11px, rgba(30, 30, 30, 0.92) 12px, rgba(20, 20, 20, 0.92));
  box-shadow: inset 0 1px 1px rgba(255, 255, 255, 0.4), 0 2px 5px rgba(0, 0, 0, 0.6);
}
.sum-in,
.sum-out {
  display: flex;
  flex-direction: column;
  justify-content: space-between;
}
.sum-in {
  padding-bottom: 4px;
}
.sum-out {
  align-items: flex-end;
  padding-top: 4px;
}
.sum-out .ring {
  margin-right: 4px;
}
.sum-out button {
  gap: 6px;
  color: #fff;
  font-size: 12px;
}
.sum-row {
  display: flex;
  align-items: center;
  gap: 13px;
}
.sum .axes {
  gap: 6px;
}
.sum .axes input {
  width: 26px;
}
.ring {
  width: 13px;
  height: 13px;
  border: 2px solid #e0b020;
  border-radius: 50%;
  background: #7e7872;
}
.sum-plus {
  position: absolute;
  left: 112px;
  top: 24px;
  width: 11px;
  height: 13px;
  stroke: #9a9a9a;
  stroke-width: 3;
}
.callout {
  position: absolute;
  left: 49px;
  top: 171px;
  width: 1387px;
  height: 475px;
  border: 3px solid #ff1c10;
  border-radius: 4px;
}

/* results */
.results {
  margin-top: 5px;
}
.log {
  display: flex;
  flex-direction: column;
  justify-content: space-between;
  height: 154px;
  padding: 18px 16px 16px;
  background: #1a1a1a;
}
.log ul {
  margin: 0;
  padding-left: 24px;
  font: 12px/16px 'DejaVu Sans Mono', monospace;
}
.log-actions {
  display: flex;
  justify-content: space-between;
  padding-left: 681px;
}
.page,
.clear {
  justify-content: center;
  gap: 6px;
  width: 74px;
  height: 22px;
  background: #383838;
  border-radius: 3px;
  color: #fff;
}
.page {
  color: #777;
}

/* status bar */
.status {
  position: relative;
  display: flex;
  height: 32px;
  padding-right: 3px;
}
.status > button,
.cmd,
.fill,
.cell {
  background: #242424;
  border-right: 2px solid #151515;
}
.status button {
  gap: 5px;
}
.drawer {
  width: 132px;
  padding-left: 10px;
}
.output {
  width: 104px;
  padding-left: 12px;
}
.cmd {
  display: flex;
  align-items: center;
  width: 400px;
  padding-left: 14px;
}
.cmd button {
  width: 76px;
}
.cmd button svg:last-child {
  margin-left: 3px;
}
.cmd input {
  width: 300px;
  height: 22px;
  padding: 0 8px;
  background: #0f0f0f;
  border: 1px solid #343434;
  border-radius: 4px;
  font: 12px/16px 'DejaVu Sans Mono', monospace;
}
.fill {
  flex: 1;
}
.cell.a {
  width: 100px;
}
.cell.b {
  width: 159px;
}
.ime {
  position: absolute;
  right: 0;
  top: 6px;
  display: flex;
  align-items: center;
  justify-content: space-between;
  width: 260px;
  height: 25px;
  padding: 0 6px 0 23px;
  background: #fff;
  border: solid #b8cdea;
  border-width: 1px 0;
  color: #0a6fd6;
  font: bold 14px/16px 'Noto Sans CJK SC', sans-serif;
}
.sogou {
  position: absolute;
  left: -15px;
  top: -5px;
}
.credit {
  position: absolute;
  right: 15px;
  top: 8px;
  font: 19px/24px 'Liberation Sans', sans-serif;
  color: rgba(140, 140, 140, 0.9);
  text-shadow: 1px 1px 0 rgba(255, 255, 255, 0.6);
}
.taskbar {
  display: flex;
  height: 8px;
  overflow: hidden;
  background: linear-gradient(90deg, #1f3740, #203a44 30%, #1d2c40 75%, #1a2a44);
}
.window-a {
  width: 288px;
  margin-left: 47px;
  background: #f2f2f2;
}
.window-b {
  width: 126px;
  margin-left: 526px;
  background: #4e5d64;
}
time {
  margin: 3px 73px 0 auto;
  color: #fff;
  font-size: 12px;
  line-height: 14px;
}
</style>
